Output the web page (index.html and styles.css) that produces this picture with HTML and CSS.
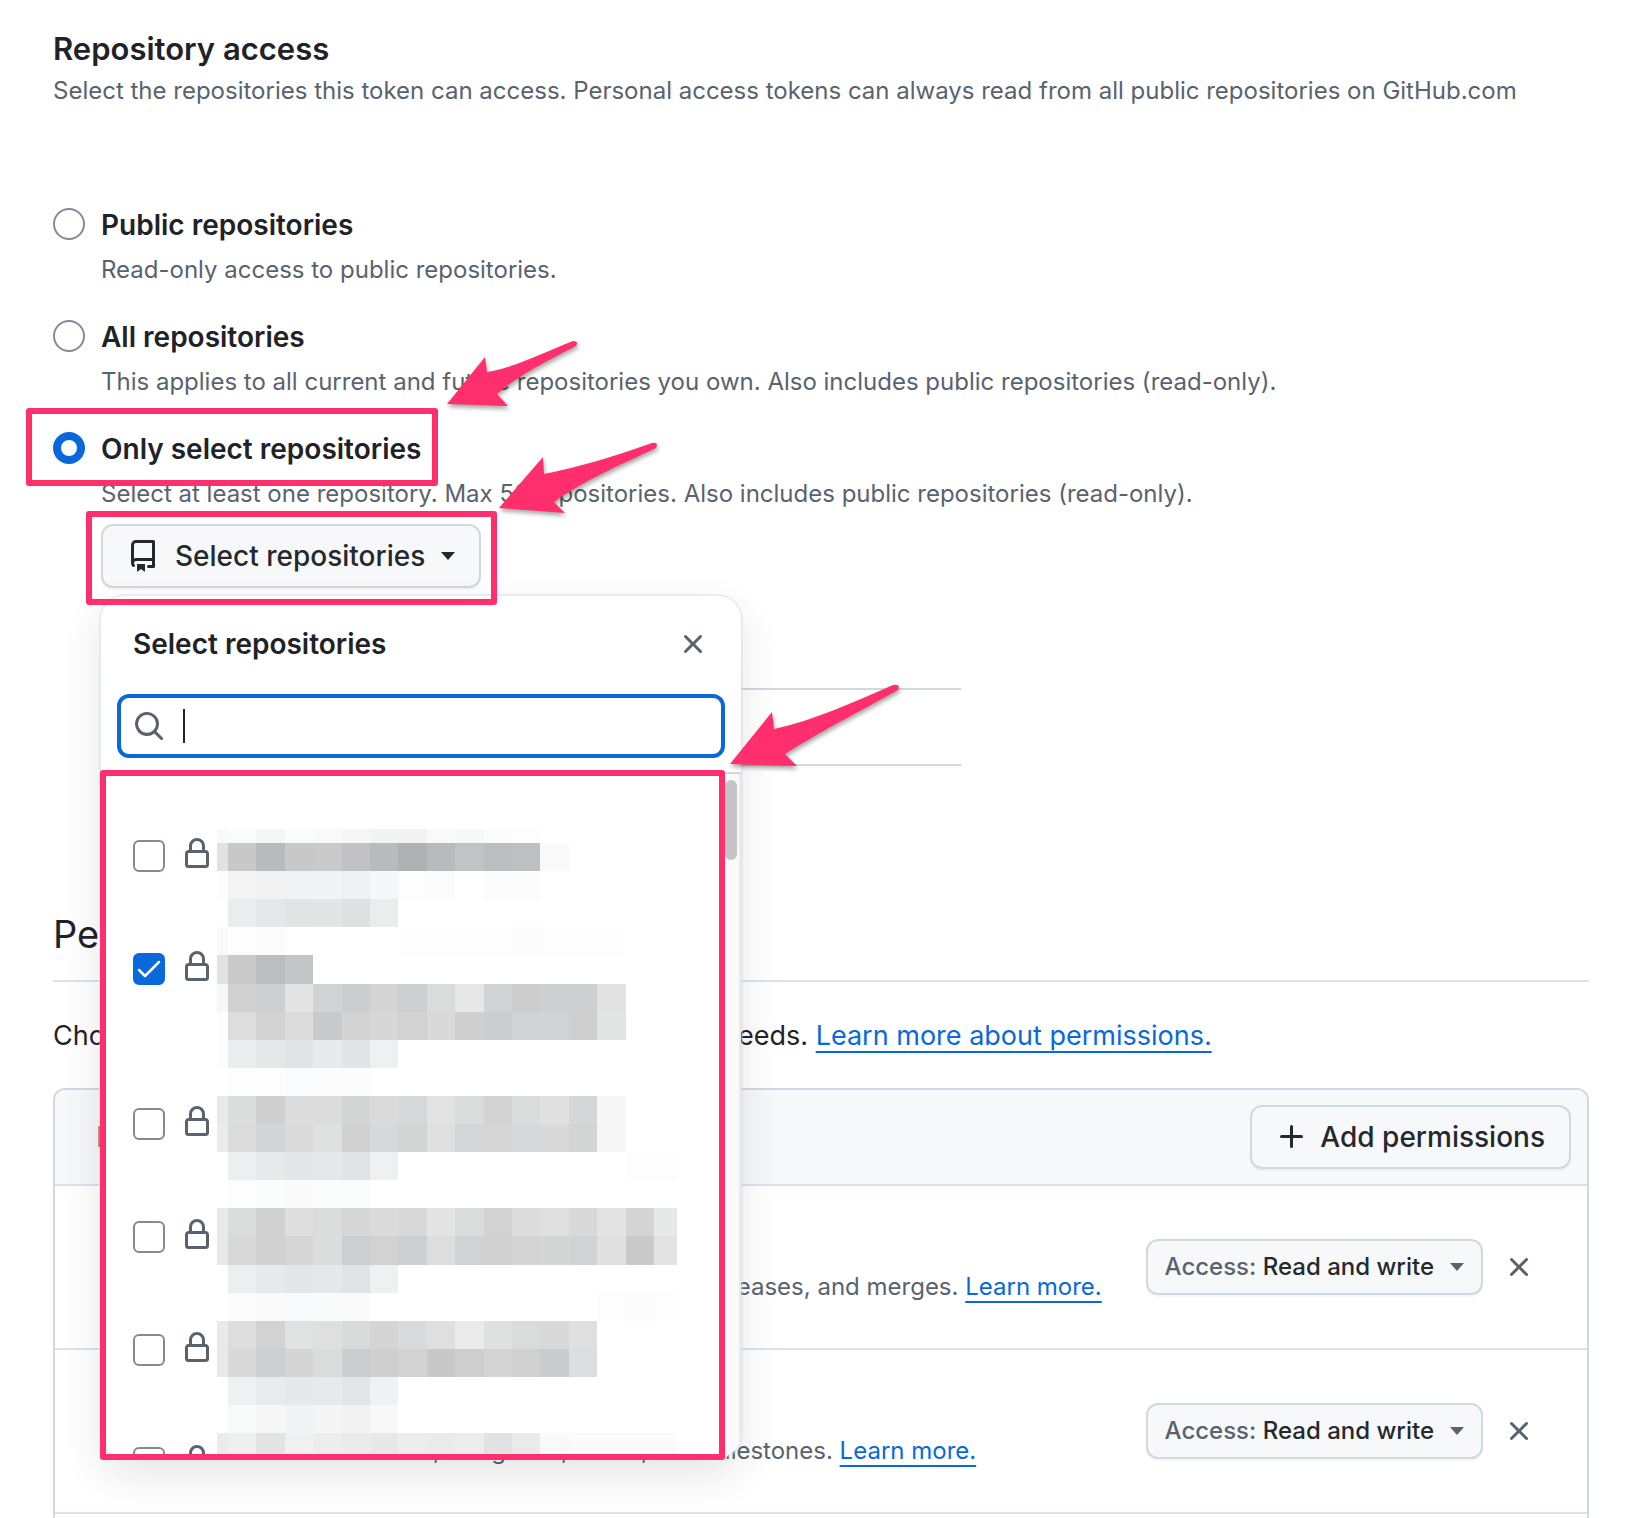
FILE: index.html
```
<!DOCTYPE html>
<html lang="en">
<head>
    <meta charset="UTF-8">
    <meta name="viewport" content="width=device-width, initial-scale=1.0">
    <title>Repository access</title>
    <link rel="stylesheet" href="styles.css">
</head>
<body>
    <svg class="sprite" aria-hidden="true">
        <symbol id="icon-repo" viewBox="0 0 16 16"><path d="M2 2.5A2.5 2.5 0 0 1 4.5 0h8.75a.75.75 0 0 1 .75.75v12.5a.75.75 0 0 1-.75.75h-2.5a.75.75 0 0 1 0-1.5h1.75v-2h-8a1 1 0 0 0-.714 1.7.75.75 0 1 1-1.072 1.05A2.495 2.495 0 0 1 2 11.5Zm10.5-1h-8a1 1 0 0 0-1 1v6.708A2.486 2.486 0 0 1 4.5 9h8ZM5 12.25a.25.25 0 0 1 .25-.25h3.5a.25.25 0 0 1 .25.25v3.25a.25.25 0 0 1-.4.2l-1.45-1.087a.249.249 0 0 0-.3 0L5.4 15.7a.25.25 0 0 1-.4-.2Z"/></symbol>
        <symbol id="icon-x" viewBox="0 0 16 16"><path d="M3.72 3.72a.75.75 0 0 1 1.06 0L8 6.94l3.22-3.22a.749.749 0 0 1 1.275.326.749.749 0 0 1-.215.734L9.06 8l3.22 3.22a.749.749 0 0 1-.326 1.275.749.749 0 0 1-.734-.215L8 9.06l-3.22 3.22a.751.751 0 0 1-1.042-.018.751.751 0 0 1-.018-1.042L6.94 8 3.72 4.78a.75.75 0 0 1 0-1.06Z"/></symbol>
        <symbol id="icon-search" viewBox="0 0 16 16"><path d="M10.68 11.74a6 6 0 0 1-7.922-8.982 6 6 0 0 1 8.982 7.922l3.04 3.04a.749.749 0 0 1-.326 1.275.749.749 0 0 1-.734-.215ZM11.5 7a4.499 4.499 0 1 0-8.997 0A4.499 4.499 0 0 0 11.5 7Z"/></symbol>
        <symbol id="icon-lock" viewBox="0 0 16 16"><path d="M4 4a4 4 0 0 1 8 0v2h.25c.966 0 1.75.784 1.75 1.75v5.5A1.75 1.75 0 0 1 12.25 15h-8.5A1.75 1.75 0 0 1 2 13.25v-5.5C2 6.784 2.784 6 3.75 6H4Zm8.25 3.5h-8.5a.25.25 0 0 0-.25.25v5.5c0 .138.112.25.25.25h8.5a.25.25 0 0 0 .25-.25v-5.5a.25.25 0 0 0-.25-.25ZM10.5 6V4a2.5 2.5 0 1 0-5 0v2Z"/></symbol>
        <symbol id="icon-plus" viewBox="0 0 16 16"><path d="M7.75 2a.75.75 0 0 1 .75.75V7h4.25a.75.75 0 0 1 0 1.5H8.5v4.25a.75.75 0 0 1-1.5 0V8.5H2.75a.75.75 0 0 1 0-1.5H7V2.75A.75.75 0 0 1 7.75 2Z"/></symbol>
    </svg>

    <main>
        <h2>Repository access</h2>
        <p class="note">Select the repositories this token can access. Personal access tokens can always read from all public repositories on GitHub.com</p>

        <form class="access-form">
            <div class="option">
                <input type="radio" name="access" id="access-public">
                <label for="access-public">Public repositories</label>
                <p class="note">Read-only access to public repositories.</p>
            </div>
            <div class="option">
                <input type="radio" name="access" id="access-all">
                <label for="access-all">All repositories</label>
                <p class="note">This applies to all current and future repositories you own. Also includes public repositories (read-only).</p>
            </div>
            <div class="option">
                <input type="radio" name="access" id="access-select" checked>
                <label for="access-select">Only select repositories</label>
                <p class="note">Select at least one repository. Max 50 repositories. Also includes public repositories (read-only).</p>
                <div class="callout callout-option"></div>
                <svg class="arrow arrow-option" viewBox="0 0 134 68"><path d="M0 64 38 17 40 32C66 28 96 13 126 1Q132 1 129 6C102 20 70 36 50 54L61 66Z"/></svg>
            </div>

            <div class="picker">
                <button type="button" class="btn picker-btn" aria-haspopup="dialog">
                    <svg class="icon"><use href="#icon-repo"/></svg>
                    Select repositories
                    <span class="caret"></span>
                </button>
                <div class="selected-list"></div>

                <div class="panel" role="dialog" aria-labelledby="panel-title">
                    <div class="panel-head">
                        <h3 id="panel-title">Select repositories</h3>
                        <button type="button" class="icon-btn" aria-label="Close"><svg class="icon"><use href="#icon-x"/></svg></button>
                    </div>
                    <div class="search">
                        <svg class="icon"><use href="#icon-search"/></svg>
                        <span class="text-cursor"></span>
                        <input type="text" aria-label="Search for a repository">
                    </div>
                    <div class="panel-body">
                        <ul class="repo-list">
                            <li><input type="checkbox" aria-label="Private repository 1"><svg class="icon"><use href="#icon-lock"/></svg></li>
                            <li class="tall"><input type="checkbox" aria-label="Private repository 2" checked><svg class="icon"><use href="#icon-lock"/></svg></li>
                            <li><input type="checkbox" aria-label="Private repository 3"><svg class="icon"><use href="#icon-lock"/></svg></li>
                            <li><input type="checkbox" aria-label="Private repository 4"><svg class="icon"><use href="#icon-lock"/></svg></li>
                            <li><input type="checkbox" aria-label="Private repository 5"><svg class="icon"><use href="#icon-lock"/></svg></li>
                            <li><input type="checkbox" aria-label="Private repository 6"><svg class="icon"><use href="#icon-lock"/></svg></li>
                        </ul>
                        <div class="scroll-track"><div class="scroll-thumb"></div></div>
                        <svg class="mosaic" id="mosaic" viewBox="0 0 460 632" aria-hidden="true"></svg>
                    </div>
                    <div class="callout callout-list"></div>
                </div>

                <div class="callout callout-picker"></div>
                <svg class="arrow arrow-picker" viewBox="0 0 162 76"><path d="M0 66 44 15 45 32C76 26 117 14 153 1Q160 0 157 6C123 22 82 40 55 60L66 71Z"/></svg>
                <svg class="arrow arrow-list" viewBox="0 0 174 86"><path d="M0 80 42 28 44 45C82 37 124 18 163 1Q171 0 168 6C132 26 86 50 55 70L67 82Z"/></svg>
            </div>
        </form>

        <h2 class="section-title">Permissions</h2>
        <p class="intro">Choose the minimal permissions necessary for your needs. <a href="#">Learn more about permissions.</a></p>

        <div class="box">
            <div class="box-head">
                <span class="box-title">Repositories</span>
                <button type="button" class="btn btn-add"><svg class="icon"><use href="#icon-plus"/></svg>Add permissions</button>
            </div>
            <div class="box-row">
                <div class="perm">
                    <h4>Contents</h4>
                    <p class="note">Repository contents, commits, branches, downloads, releases, and merges. <a href="#">Learn more.</a></p>
                </div>
                <button type="button" class="btn btn-access" aria-haspopup="menu"><span><span class="muted">Access:</span> Read and write</span><span class="caret"></span></button>
                <button type="button" class="icon-btn" aria-label="Remove Contents"><svg class="icon"><use href="#icon-x"/></svg></button>
            </div>
            <div class="box-row">
                <div class="perm">
                    <h4>Issues</h4>
                    <p class="note">Issues and related comments, assignees, labels, and milestones. <a href="#">Learn more.</a></p>
                </div>
                <button type="button" class="btn btn-access" aria-haspopup="menu"><span><span class="muted">Access:</span> Read and write</span><span class="caret"></span></button>
                <button type="button" class="icon-btn" aria-label="Remove Issues"><svg class="icon"><use href="#icon-x"/></svg></button>
            </div>
        </div>
    </main>

    <script src="mosaic.js"></script>
</body>
</html>
```
FILE: styles.css
```
* {
    box-sizing: border-box;
}
body {
    margin: 0;
    font-family: Inter, "Liberation Sans", sans-serif;
    font-size: 28px;
    line-height: 40px;
    color: #1f2328;
    background-color: #fff;
    overflow: hidden;
}
main {
    padding: 25px 59px 0 53px;
}
h2, h3, h4, p, ul {
    margin: 0;
    padding: 0;
}
h2 {
    font-size: 31px;
    line-height: 48px;
    font-weight: 600;
}
a {
    color: #0969da;
    text-decoration: underline;
    text-decoration-thickness: 2px;
    text-underline-offset: 6px;
}
.note {
    font-size: 24px;
    line-height: 36px;
    color: #59636e;
}
.sprite {
    display: none;
}
.icon {
    width: 32px;
    height: 32px;
    flex: none;
    fill: currentColor;
}

/* radio options */
.access-form {
    margin-top: 95px;
}
.option {
    position: relative;
    display: grid;
    grid-template-columns: 32px 1fr;
    column-gap: 16px;
    row-gap: 8px;
    align-items: center;
    margin-bottom: 28px;
}
.option label {
    padding-top: 2px;
    line-height: 38px;
    font-weight: 600;
}
.option .note {
    grid-column: 2;
}
input[type="radio"], input[type="checkbox"] {
    appearance: none;
    width: 32px;
    height: 32px;
    margin: 0;
    flex: none;
    border: 2px solid #818b98;
    border-radius: 50%;
    background-color: #fff;
}
input[type="radio"]:checked {
    border: 8px solid #0969da;
}
input[type="checkbox"] {
    border-radius: 6px;
}
input[type="checkbox"]:checked {
    border-color: #0969da;
    background: #0969da url("data:image/svg+xml,%3Csvg xmlns='http://www.w3.org/2000/svg' viewBox='0 0 28 28'%3E%3Cpath d='M4 15l6 6L24 7' fill='none' stroke='white' stroke-width='2.5' stroke-linecap='round' stroke-linejoin='round'/%3E%3C/svg%3E") center / 28px no-repeat;
}

/* buttons */
.btn {
    display: inline-flex;
    align-items: center;
    gap: 16px;
    height: 64px;
    padding: 0 24px;
    border: 2px solid #d1d9e0;
    border-radius: 12px;
    background-color: #f6f8fa;
    box-shadow: 0 2px 0 rgba(31, 35, 40, 0.04);
    color: #25292e;
    font: 500 28px/40px Inter, "Liberation Sans", sans-serif;
    white-space: nowrap;
    cursor: pointer;
}
.btn-add {
    gap: 12px;
}
.btn-access {
    height: 56px;
    padding: 0 17px;
    font-size: 24px;
}
.muted {
    color: #59636e;
}
.caret {
    border: 7px solid transparent;
    border-top: 8px solid currentColor;
    border-bottom: 0;
}
.btn-access .caret {
    color: #59636e;
}
.icon-btn {
    display: flex;
    padding: 0;
    border: 0;
    background: none;
    color: #59636e;
    cursor: pointer;
}

/* repository picker */
.picker {
    position: relative;
    margin: -14px 0 0 48px;
}
.picker-btn {
    display: flex;
}
.option + .picker {
    margin-top: -16px;
}
.selected-list {
    max-width: 860px;
    height: 78px;
    margin: 100px 0 138px;
    border: solid #d1d9e0;
    border-width: 2px 0;
}
.panel {
    position: absolute;
    top: 72px;
    left: 0;
    z-index: 1;
    width: 640px;
    border-radius: 24px;
    background-color: #fff;
    box-shadow: 0 0 0 2px rgba(209, 217, 224, 0.4), 0 16px 40px rgba(37, 41, 46, 0.12);
}
.panel-head {
    display: flex;
    justify-content: space-between;
    align-items: center;
    padding: 28px 32px;
}
.panel-head h3 {
    font-size: 28px;
    line-height: 40px;
    font-weight: 600;
}
.search {
    position: relative;
    display: flex;
    align-items: center;
    gap: 16px;
    height: 64px;
    margin: 2px 16px 14px;
    padding: 0 12px;
    border: 4px solid #0969da;
    border-radius: 12px;
    color: #59636e;
}
.search input {
    flex: 1;
    min-width: 0;
    border: 0;
    outline: 0;
    background: none;
    font: 28px/40px Inter, "Liberation Sans", sans-serif;
}
.text-cursor {
    position: absolute;
    left: 62px;
    width: 2px;
    height: 34px;
    background-color: #1f2328;
}
.panel-body {
    position: relative;
    display: flex;
    height: 686px;
    border-top: 2px solid #d1d9e0;
    border-radius: 0 0 24px 24px;
    overflow: hidden;
}
.repo-list {
    flex: 1;
    padding-top: 50px;
    list-style: none;
}
.repo-list li {
    display: flex;
    gap: 16px;
    height: 113px;
    padding: 16px 32px;
}
.repo-list .tall {
    height: 155px;
}
.repo-list .icon {
    margin-top: -2px;
    color: #59636e;
}
.scroll-track {
    width: 18px;
    padding: 6px 2px;
    border-right: 2px solid #ebebeb;
    background-color: #fafafa;
}
.scroll-thumb {
    width: 12px;
    height: 80px;
    border-radius: 6px;
    background-color: #c4c4c4;
}
.mosaic {
    position: absolute;
    top: 55px;
    left: 116px;
    width: 460px;
    height: 632px;
    shape-rendering: crispEdges;
}

/* highlight frames and arrows */
.callout {
    position: absolute;
    border: 6px solid #ff2f6e;
    border-radius: 3px;
    pointer-events: none;
}
.callout-option {
    top: -20px;
    left: -27px;
    width: 412px;
    height: 78px;
}
.callout-picker {
    top: -13px;
    left: -15px;
    z-index: 2;
    width: 411px;
    height: 94px;
}
.callout-list {
    top: 174px;
    left: -1px;
    width: 625px;
    height: 690px;
}
.arrow {
    position: absolute;
    z-index: 2;
    fill: #ff2f6e;
    filter: drop-shadow(1px 3px 2px rgba(0, 0, 0, 0.35));
}
.arrow-option {
    top: -88px;
    left: 394px;
    width: 134px;
}
.arrow-picker {
    top: -82px;
    left: 398px;
    width: 162px;
}
.arrow-list {
    top: 160px;
    left: 629px;
    width: 174px;
}

/* permissions */
.section-title {
    padding-bottom: 16px;
    border-bottom: 2px solid #dce2e8;
    font-size: 38px;
    line-height: 60px;
    font-weight: 400;
}
.intro {
    margin: 34px 0 32px;
    font-size: 27px;
}
.box {
    padding-bottom: 32px;
    border: 2px solid #d1d9e0;
    border-radius: 12px;
}
.box-head, .box-row {
    display: flex;
    align-items: center;
    border-bottom: 2px solid #dce2e8;
}
.box-head {
    justify-content: space-between;
    padding: 15px 16px 15px 41px;
    border-radius: 10px 10px 0 0;
    background-color: #f6f8fa;
}
.box-title {
    color: #59636e;
}
.box-row {
    height: 164px;
    padding: 0 52px 0 46px;
}
.box-row .icon-btn {
    margin-left: 20px;
}
.perm {
    flex: 1;
}
.perm h4 {
    font-size: 28px;
    line-height: 40px;
    font-weight: 600;
}
```
FILE: mosaic.js
```
// one string per row of blocks, "." is an empty block
const rows = [
    'f8f9f9 fafcfb f5f6f6 fafcfb f9f9f9 f6f6f6 f2f3f3 f3f3f3 f9f9f9 f7f9f8 fafbfa fdfdfd',
    'e0e1e3 c8c8c8 b9babc c7c8c7 cacaca c2c2c4 b9babc b0b1b3 b9babc c2c3c5 bcbdbf bfc0c2 f9f9f9',
    'fdfdfd f4f4f4 f2f2f2 f1f2f4 f1f3f5 eef0f2 f5f7f9 fdfdfd fcfcfc . fcfcfc fcfcfc',
    '. eaeced e5e7e8 e1e3e4 e3e4e5 dee0e1 eaeced',
    'fafafa fdfdfd fbfbfb . . . . fdfdfd fdfdfd fdfdfd fdfdfd fcfcfc fdfdfd fdfdfd fdfdfd',
    'e1e2e4 cacaca bcbdbf c4c5c7',
    'f6f8f7 d0d0d0 cdcfd1 e4e4e4 d1d3d5 cccdcf d4d4d4 cdcfd1 dadcdb e7e7e7 d1d3d5 cccccc cecfd0 cecfd0 e1e1e1',
    'fdfdfd dddddd d3d3d3 dbdbdb c9cacb d3d3d3 d7d7d7 d2d2d2 d9d9d9 cfcfcf cbcdcf d1d3d4 d1d3d4 cfcfcf e3e5e4',
    'fdfdfd ebecee e6e7e9 e2e3e5 e8e9eb e3e4e6 eef0f2',
    '. fdfdfd fdfdfd fafbfd fbfbfb fcfcfc',
    'e8e9eb dbdddc cfcfd0 dcdcdc dcdcdc d3d5d4 dadada d6d8da e3e3e3 dadcdb d3d3d3 dadcdb e0e0e0 d4d6d8 f7f7f7',
    'eaebed dbdbdb d3d5d7 dadada dfe1e0 d1d1d1 d6d8da d3d5d4 e0e0e0 d4d6d8 d6d6d6 d6d8da d9d9d9 d3d5d4 f7f7f7',
    '. edeef0 e8e9eb e5e6e8 e6e7e9 e2e3e5 eef0f2 . . . . . . . . fdfdfd fdfdfd',
    '. fdfdfd fbfdfc fbfafa fafcfb fafcfb',
    'e8e9eb dbdddc d1d1d1 dedede dbdddc d7d7d7 dadada d8d8d8 e4e4e4 dadcdb d2d2d2 dcdcdc e0e0e0 d9d9d9 e4e4e4 d4d4d4 e7e9e8',
    'e8e9eb d8d8d8 d1d1d1 d6d6d6 dbdddc cdcfd1 d2d2d2 cdcfd1 dddddd d0d2d4 d1d1d1 d4d4d4 d4d6d5 d1d3d5 e0e0e0 cacaca e3e3e3',
    '. edeef0 e8e9eb e5e6e8 e6e7e9 e2e3e5 eef0f2',
    '. fbfbfb fafafa f8f9fb f9fafa f9f9f9 . . . . . . . . fdfdfd fcfcfc fdfdfd',
    'e8e9eb dddddd d2d2d2 e0e2e1 dfdfdf d9dbda d5d5d5 d8dadc dfdfdf ebebeb dfe1e0 dadcdb d9d9d9 e0e0e0',
    'e8e9eb d9d9d9 cdcfd1 d5d5d5 dadcdb cccdcf cfcfcf d2d2d2 c8c8c8 cfcfcf d4d4d4 d0d0d0 c9cbcc dbdddf',
    '. eef0f2 e9eaec e7e8ea e8e9eb e4e5e7 eff1f3',
    '. f8faf9 f6f6f6 f2f3f5 f5f5f5 f3f3f3 f8f8f8',
    'ebebed efefef e2e4e3 eff1f0 ededed ebebeb e8e8e8 ededed ebebeb ededed e2e2e2 eaeaea f8faf9 fbfbfb fbfbfb fbfbfb fbfbfb'
];

const mosaic = document.getElementById('mosaic');
const block = 28.4;
const line = 28.1;

rows.forEach(function(row, r) {
    // the first row and the first column are cut short
    const y = r === 0 ? 0 : 14 + line * (r - 1);
    const height = r === 0 ? 14 : line;

    row.split(' ').forEach(function(color, c) {
        if (color === '.') {
            return;
        }
        const rect = document.createElementNS('http://www.w3.org/2000/svg', 'rect');
        rect.setAttribute('x', c === 0 ? 0 : 11 + block * (c - 1));
        rect.setAttribute('y', y);
        rect.setAttribute('width', c === 0 ? 11 : block);
        rect.setAttribute('height', height);
        rect.setAttribute('fill', '#' + color);
        mosaic.appendChild(rect);
    });
});
```
